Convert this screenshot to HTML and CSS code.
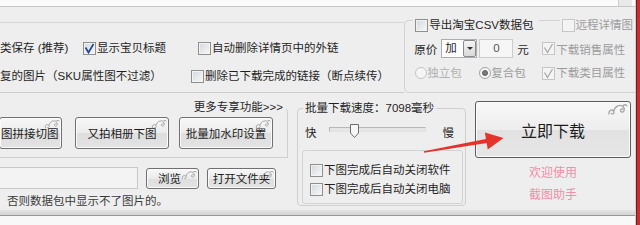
FILE: index.html
```html
<!DOCTYPE html>
<html lang="zh-CN">
<head>
<meta charset="utf-8">
<title>截图助手</title>
<link rel="stylesheet" href="styles.css">
</head>
<body>
<div class="win">
  <div class="main">
    <div class="topfield"><span class="tf-end"></span></div>

    <div class="rowA">
      <div class="optbox">
        <div class="orow">
          <span class="c1">类保存 (推荐)</span>
          <span class="cb c2"><i class="box"><svg width="11" height="11" viewBox="0 0 11 11"><path d="M1.5 4.5 L4.5 9.5 L9.5 1" fill="none" stroke="#23468f" stroke-width="1.7"/></svg></i>显示宝贝标题</span>
          <span class="cb"><i class="box"></i>自动删除详情页中的外链</span>
        </div>
        <div class="orow r2">
          <span class="c1b">复的图片（SKU属性图不过滤）</span>
          <span class="cb"><i class="box"></i>删除已下载完成的链接（断点续传）</span>
        </div>
      </div>

      <div class="csvbox">
        <div class="ghead">
          <span class="cb leg"><i class="box"></i>导出淘宝CSV数据包</span>
          <span class="cb leg2 dis"><i class="box off"></i>远程详情图</span>
        </div>
        <div class="grow grow1">
          <div class="cell"><span>原价</span><span class="combo"><span class="cval">加</span><span class="carrow"><i></i></span></span></div>
          <div class="cell"><span class="num">0</span><span class="yuan">元</span></div>
          <div class="cell cb dis"><i class="box off"><svg width="11" height="11" viewBox="0 0 11 11"><path d="M1.5 4.5 L4.5 9.5 L9.5 1" fill="none" stroke="#a9a9a9" stroke-width="1.3"/></svg></i>下载销售属性</div>
        </div>
        <div class="grow grow2">
          <div class="cell dis2"><i class="radio off"></i>独立包</div>
          <div class="cell dis"><i class="radio on"><b></b></i>复合包</div>
          <div class="cell cb dis"><i class="box off"><svg width="11" height="11" viewBox="0 0 11 11"><path d="M1.5 4.5 L4.5 9.5 L9.5 1" fill="none" stroke="#a9a9a9" stroke-width="1.3"/></svg></i>下载类目属性</div>
        </div>
      </div>
    </div>

    <div class="rowB">
      <div class="tools">
        <div class="more">更多专享功能&gt;&gt;&gt;</div>
        <div class="toolbox">
          <div class="btn b1">图拼接切图<svg class="sw" width="16" height="11" viewBox="0 0 16 11"><path d="M1.5 9 C0.5 6 3.5 4.5 5 6.5 C6 8 4 9.5 3 8 M5 6.5 C6 2 10 1 12 2.5 C14.5 4.5 13 8 11 7 C9.5 6 11 4 12.5 5 M12 2.5 C13 1 15 1 15.5 2.5"/></svg></div>
          <div class="btn b2">又拍相册下图<svg class="sw" width="16" height="11" viewBox="0 0 16 11"><path d="M1.5 9 C0.5 6 3.5 4.5 5 6.5 C6 8 4 9.5 3 8 M5 6.5 C6 2 10 1 12 2.5 C14.5 4.5 13 8 11 7 C9.5 6 11 4 12.5 5 M12 2.5 C13 1 15 1 15.5 2.5"/></svg></div>
          <div class="btn b3">批量加水印设置<svg class="sw" width="16" height="11" viewBox="0 0 16 11"><path d="M1.5 9 C0.5 6 3.5 4.5 5 6.5 C6 8 4 9.5 3 8 M5 6.5 C6 2 10 1 12 2.5 C14.5 4.5 13 8 11 7 C9.5 6 11 4 12.5 5 M12 2.5 C13 1 15 1 15.5 2.5"/></svg></div>
        </div>
        <div class="frow">
          <span class="path"></span>
          <div class="btn sbtn b4">浏览<svg class="sw" width="16" height="11" viewBox="0 0 16 11"><path d="M1.5 9 C0.5 6 3.5 4.5 5 6.5 C6 8 4 9.5 3 8 M5 6.5 C6 2 10 1 12 2.5 C14.5 4.5 13 8 11 7 C9.5 6 11 4 12.5 5 M12 2.5 C13 1 15 1 15.5 2.5"/></svg></div>
          <div class="btn sbtn b5">打开文件夹<svg class="sw" width="16" height="11" viewBox="0 0 16 11"><path d="M1.5 9 C0.5 6 3.5 4.5 5 6.5 C6 8 4 9.5 3 8 M5 6.5 C6 2 10 1 12 2.5 C14.5 4.5 13 8 11 7 C9.5 6 11 4 12.5 5 M12 2.5 C13 1 15 1 15.5 2.5"/></svg></div>
        </div>
        <div class="hint">否则数据包中显示不了图片的。</div>
      </div>

      <div class="speed">
        <div class="legend">批量下载速度：7098毫秒</div>
        <div class="slrow">
          <span>快</span>
          <div class="slider"><div class="track"></div><svg class="thumb" width="9" height="14" viewBox="0 0 9 14"><path d="M0.5 0.5 H8.5 V9 L4.5 13.5 L0.5 9 Z" fill="#f6f6f6" stroke="#6d6d6d"/></svg></div>
          <span class="slow">慢</span>
        </div>
        <div class="inner">
          <div class="cb crow"><i class="box"></i>下图完成后自动关闭软件</div>
          <div class="cb crow crow2"><i class="box"></i>下图完成后自动关闭电脑</div>
        </div>
      </div>

      <div class="go">
        <div class="btn bigbtn">立即下载<svg class="sw bigsw" width="21" height="14" viewBox="0 0 16 11"><path d="M1.5 9 C0.5 6 3.5 4.5 5 6.5 C6 8 4 9.5 3 8 M5 6.5 C6 2 10 1 12 2.5 C14.5 4.5 13 8 11 7 C9.5 6 11 4 12.5 5 M12 2.5 C13 1 15 1 15.5 2.5"/></svg></div>
        <div class="welcome">欢迎使用<br>截图助手</div>
      </div>
    </div>

    <div class="status"></div>

    <svg class="arrow" width="640" height="225" viewBox="0 0 640 225"><polygon points="423.9,151.2 485.9,139.0 484.9,132.6 503.5,138 487.7,149.4 486.7,143.0 424.1,152.8" fill="#e5322b"/></svg>
  </div>
  <div class="redge"></div>
</div>
</body>
</html>
```

FILE: styles.css
```css
* { box-sizing: border-box; }

body {
  margin: 0;
  width: 640px;
  height: 225px;
  overflow: hidden;
  background: #eeeeee;
  font-family: "Liberation Sans", "Noto Sans CJK SC", sans-serif;
  font-size: 11.5px;
  color: #1f1f1f;
}

.win { display: flex; height: 225px; }

.main {
  position: relative;
  width: 636px;
  border-right: 1px solid #cfcfcf;
  display: flex;
  flex-direction: column;
}

.redge {
  width: 4px;
  background: linear-gradient(to right, #7a1a1a 0, #7a1a1a 1px, #c52f35 1px);
}

.topfield {
  height: 7px;
  background: #fbfbfb;
  border-bottom: 1px solid #c6c6c6;
  display: flex;
  justify-content: flex-end;
}
.tf-end { width: 14px; background: #e9e9e9; border-left: 1px solid #cfcfcf; margin-right: 3px; }

/* ---------- top row ---------- */
.rowA { display: flex; margin-top: 13px; height: 73px; }

.optbox {
  width: 405px;
  margin-top: 2px;
  height: 71px;
  border-top: 1px solid #d6d6d6;
  border-bottom: 1px solid #cdcdcd;
  padding-top: 17px;
}

.orow { display: flex; align-items: center; height: 16px; line-height: 16px; white-space: nowrap; }
.r2 { margin-top: 12px; }
.c1 { width: 83px; }
.c2 { width: 115px; }
.c1b { width: 191px; }

.cb { display: inline-flex; align-items: center; white-space: nowrap; }

.box {
  width: 13px;
  height: 13px;
  flex: none;
  margin-right: 1px;
  border: 1px solid #8e8f8f;
  background: linear-gradient(135deg, #d3d8de, #f8f8f8);
  box-shadow: inset 0 0 0 1px #f3f3f3;
  display: flex;
  align-items: center;
  justify-content: center;
}
.box svg { display: block; }
.box.off { border-color: #c6c6c6; background: #f4f4f4; box-shadow: none; }

.dis { color: #9c9c9c; }
.dis2 { color: #b0b0b0; }

.csvbox {
  width: 231px;
  height: 73px;
  border-top: 1px solid #d2d2d2;
  border-left: 1px solid #d2d2d2;
  border-bottom: 1px solid #d2d2d2;
  border-radius: 5px 0 0 5px;
}

.ghead { display: flex; margin-top: -3px; height: 14px; line-height: 14px; }
.leg { background: #eeeeee; padding: 0 5px 0 2px; margin-left: 8px; }
.leg2 { background: #eeeeee; padding: 0 2px; margin-left: auto; }

.grow {
  display: grid;
  grid-template-columns: 65px 63px 1fr;
  align-items: center;
  padding-left: 9px;
  white-space: nowrap;
}
.grow1 { margin-top: 7px; height: 19px; }
.grow2 { margin-top: 8px; height: 14px; line-height: 14px; }
.cell { display: flex; align-items: center; }

.combo {
  margin-left: 4px;
  width: 36px;
  height: 19px;
  border: 1px solid #abadb3;
  background: #ffffff;
  display: flex;
  align-items: center;
}
.cval { padding-left: 3px; line-height: 17px; }
.carrow {
  margin-left: auto;
  width: 13px;
  height: 17px;
  border: 1px solid #8b8b8b;
  border-radius: 2px;
  background: linear-gradient(#f5f5f5, #d9d9d9);
  display: flex;
  align-items: center;
  justify-content: center;
}
.carrow i {
  width: 0; height: 0;
  border-left: 3px solid transparent;
  border-right: 3px solid transparent;
  border-top: 3px solid #333;
}

.num {
  width: 34px;
  height: 19px;
  border: 1px solid #cbcbcb;
  background: #f6f6f6;
  color: #555;
  text-align: center;
  line-height: 17px;
}
.yuan { margin-left: 4px; }

.radio {
  width: 12px;
  height: 12px;
  flex: none;
  border-radius: 50%;
  border: 1px solid #c4c4c4;
  background: #f5f5f5;
  margin-left: 1px;
  display: flex;
  align-items: center;
  justify-content: center;
}
.radio.on { margin-left: 0; border-color: #a3a3a3; }
.radio.on b { width: 6px; height: 6px; border-radius: 50%; background: #7c7c7c; border: 1px solid #5f5f5f; }

/* ---------- bottom row ---------- */
.rowB { display: flex; height: 117px; }

.tools { width: 297px; padding-top: 7px; }
.more { height: 14px; line-height: 14px; text-align: right; padding-right: 14px; }

.toolbox {
  width: 288px;
  height: 51px;
  margin-top: -7px;
  border-top: 1px solid transparent;
  border-right: 1px solid #cfcfcf;
  border-bottom: 1px solid #cfcfcf;
  border-top-right-radius: 5px;
  padding-top: 9px;
  display: flex;
  align-items: flex-start;
}

.btn {
  position: relative;
  display: flex;
  align-items: center;
  justify-content: center;
  white-space: nowrap;
  overflow: hidden;
  border: 1px solid #707070;
  border-radius: 3px;
  background: linear-gradient(#f7f7f7, #ebebeb 50%, #dedede 51%, #e3e3e3);
  box-shadow: inset 0 0 0 1px #fbfbfb;
  color: #1c1c1c;
}
.sw { position: absolute; top: 1px; right: 1px; fill: none; stroke: #a6a6a6; stroke-width: 1; }

.b1 { width: 63px; height: 32px; margin-left: -1px; justify-content: flex-start; padding-left: 1px; }
.b2 { width: 94px; height: 32px; margin-left: 13px; }
.b3 { width: 94px; height: 32px; margin-left: 10px; }

.frow { display: flex; align-items: center; margin-top: 9px; height: 22px; }
.path { width: 139px; height: 22px; margin-left: -1px; border: 1px solid #c8c8c8; background: #f3f3f3; }
.sbtn { height: 21px; }
.b4 { width: 53px; margin-left: 8px; padding-right: 6px; }
.b5 { width: 69px; margin-left: 8px; }

.hint { margin-top: 5px; line-height: 14px; padding-left: 7px; color: #3a3a3a; white-space: nowrap; }

.speed {
  margin-top: 15px;
  width: 169px;
  height: 98px;
  border: 1px solid #cfcfcf;
  border-radius: 4px;
  padding: 0 3px 0 7px;
}
.legend {
  width: max-content;
  margin-top: -8px;
  margin-left: -2px;
  padding: 0 2px;
  height: 14px;
  line-height: 14px;
  background: #eeeeee;
}
.slrow { display: flex; align-items: center; height: 14px; line-height: 14px; margin-top: 11px; }
.slider { position: relative; width: 97px; height: 14px; margin-left: 12px; }
.track { margin-top: 1px; height: 5px; border: 1px solid #b8b8b8; border-bottom-color: #e2e2e2; border-right-color: #e2e2e2; background: #e6e6e6; }
.thumb { position: absolute; left: 21px; top: -2px; }
.slow { margin-left: 17px; }

.inner {
  margin-top: 10px;
  margin-left: -3px;
  width: 161px;
  height: 54px;
  border: 1px solid #d3d3d3;
  border-radius: 3px;
  padding: 12px 0 0 7px;
}
.crow { display: flex; height: 14px; line-height: 14px; }
.crow2 { margin-top: 5px; }

.go {
  margin-left: 9px;
  width: 156px;
  padding-top: 8px;
  display: flex;
  flex-direction: column;
  align-items: center;
}
.bigbtn {
  width: 156px;
  height: 57px;
  font-size: 16px;
  border-color: #5c5c5c;
  background: linear-gradient(#f8f8f8, #ededed 50%, #e2e2e2 51%, #e6e6e6);
}
.bigsw { top: 1px; right: 2px; }

.welcome {
  margin-top: 4px;
  font-size: 12px;
  line-height: 22px;
  color: #ef90a8;
  text-align: center;
}

.status {
  flex: 1;
  background: linear-gradient(#e4e4e4 0, #d4d4d4 5px, #979797 5px, #979797 6px, #f8f8f8 6px);
}

.arrow { position: absolute; left: 0; top: 0; pointer-events: none; }
```
